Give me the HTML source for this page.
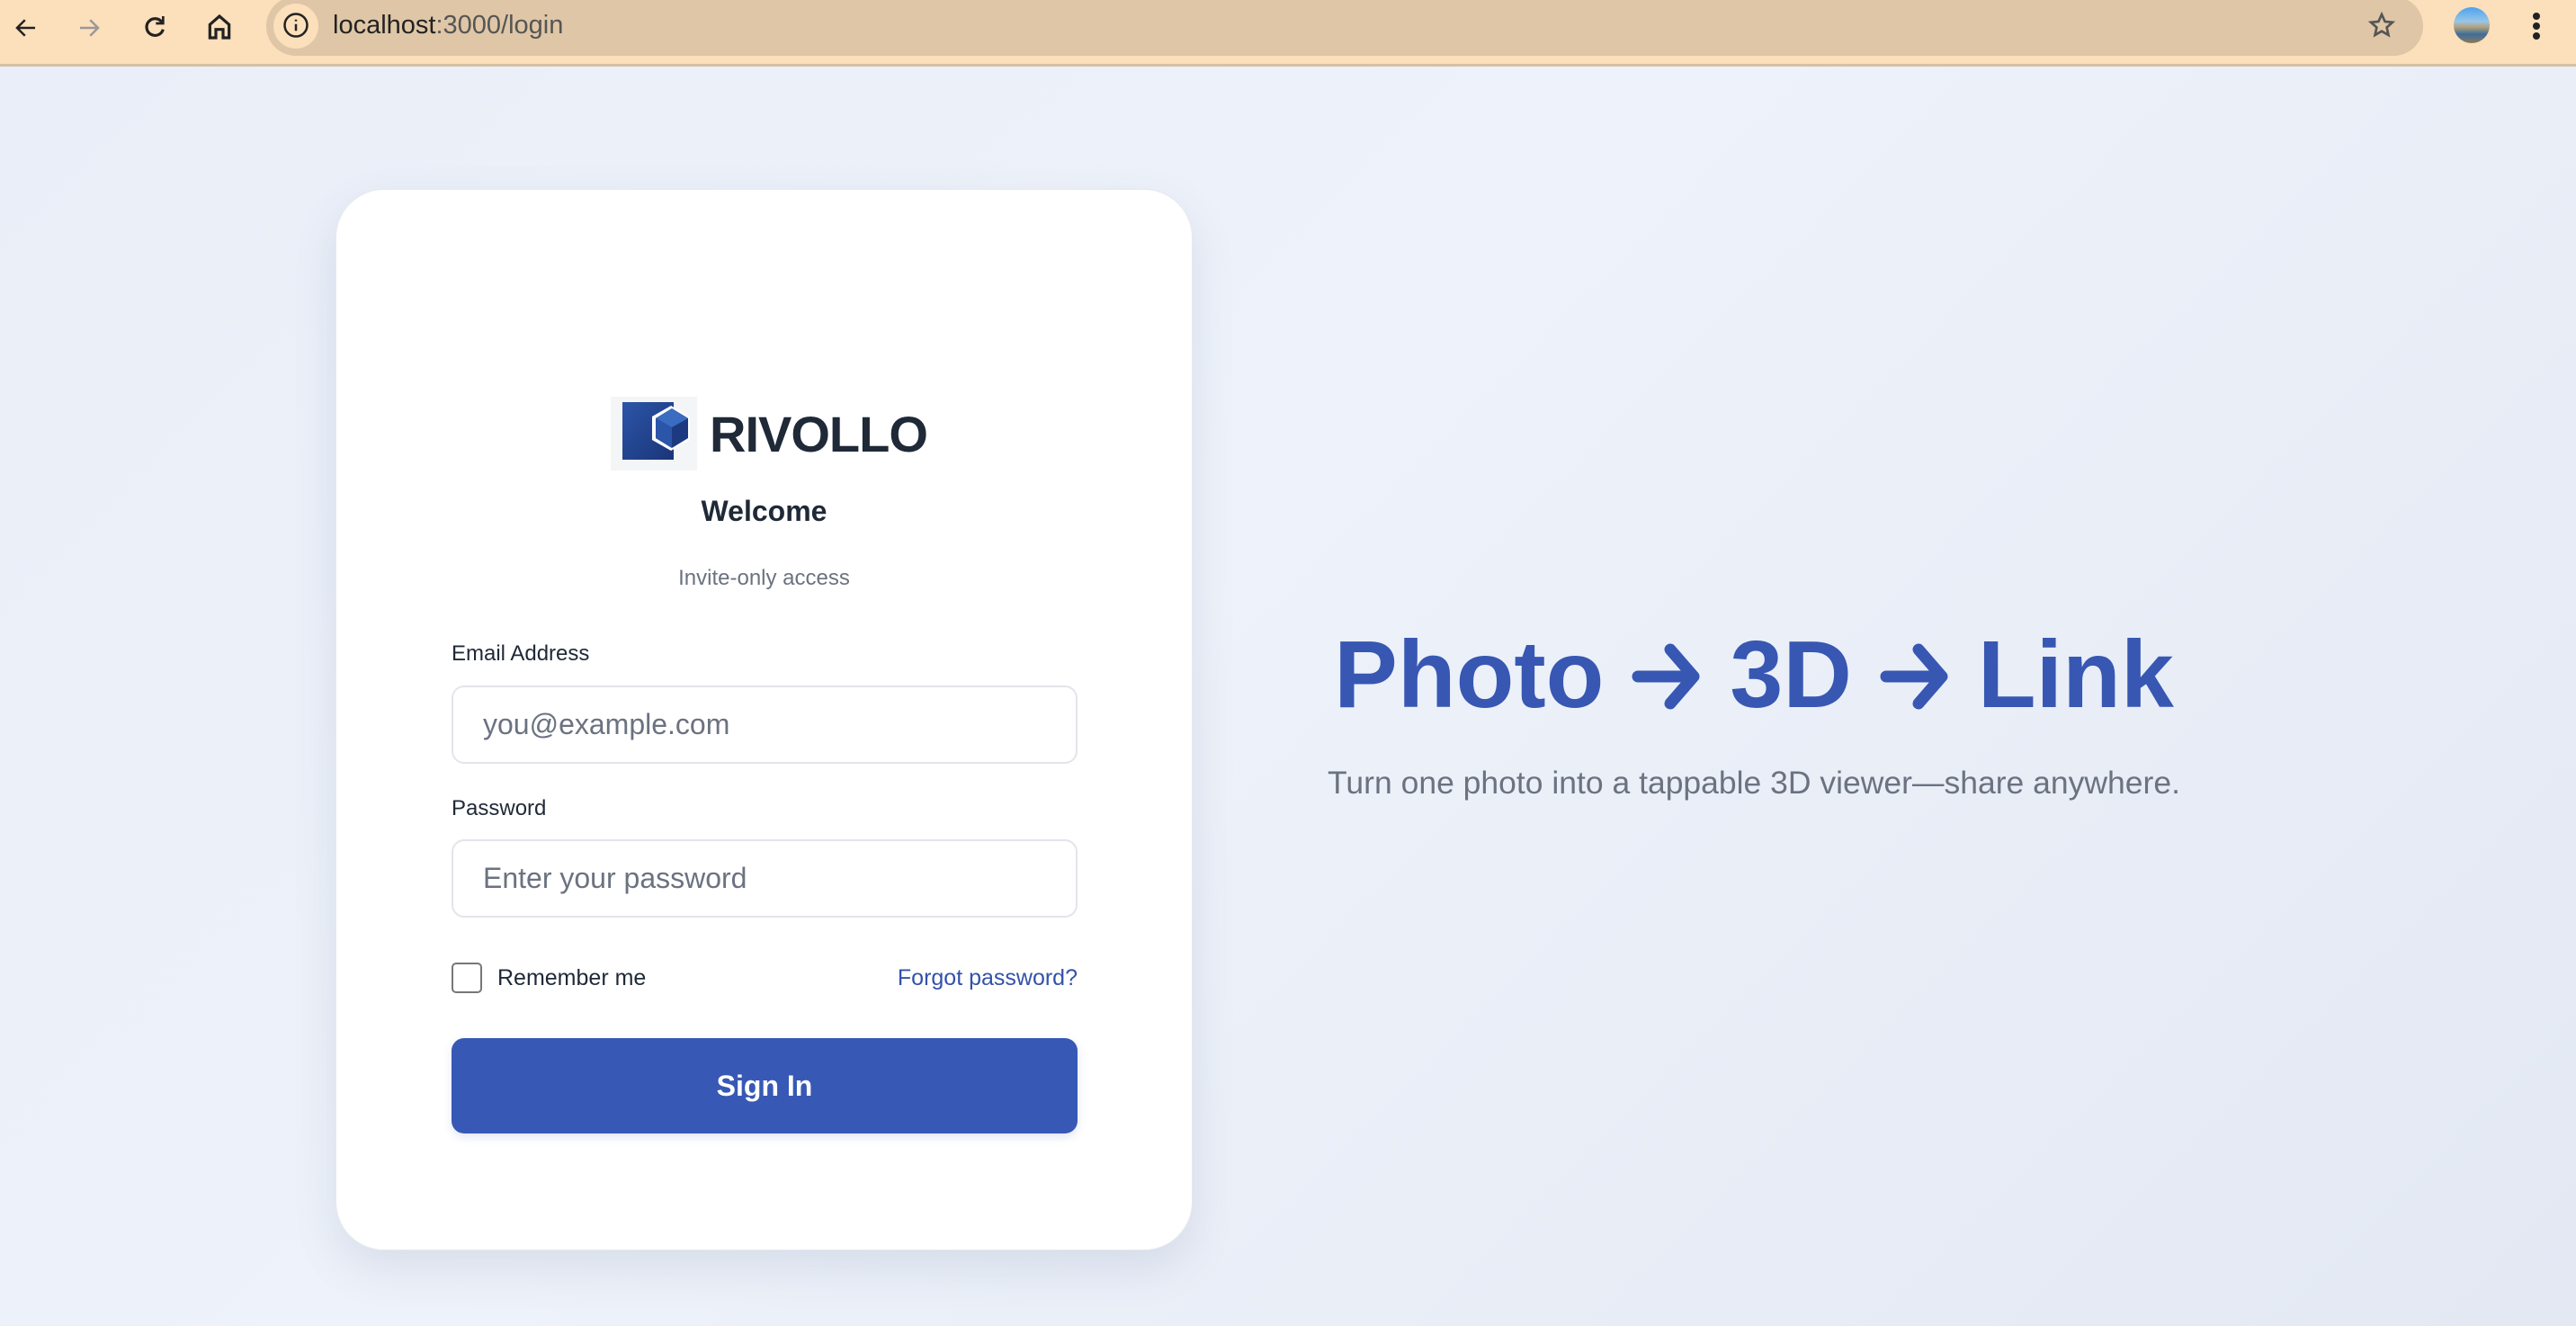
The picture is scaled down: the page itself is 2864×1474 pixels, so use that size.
<!DOCTYPE html>
<html><head><meta charset="utf-8"><style>
*{box-sizing:border-box;margin:0;padding:0}
body{width:2864px;height:1474px;overflow:hidden;font-family:"Liberation Sans",sans-serif;background:linear-gradient(135deg,#e9eef8 0%,#eef2fa 45%,#e3e8f3 100%);position:relative}
.bar{position:absolute;left:0;top:0;width:2864px;height:74px;background:#fcdfbb;border-bottom:3px solid #d6c0a4}
.url{position:absolute;left:296px;top:-4px;width:2398px;height:66px;background:#dfc6a6;border-radius:33px}
.info{position:absolute;left:304px;top:4px;width:50px;height:50px;border-radius:25px;background:#fcdfbb}
.abs{position:absolute}
.card{position:absolute;left:373px;top:210px;width:953px;height:1180px;background:#fff;border-radius:54px;box-shadow:0 20px 50px rgba(60,80,120,.12);border:1px solid #e6e9ef}
.lbl{position:absolute;left:502px;font-size:24px;color:#1f2937;font-weight:500}
.inp{position:absolute;left:502px;width:696px;height:87px;border:2px solid #e2e5ea;border-radius:14px;font-size:32px;color:#6b7280;padding-left:33px;line-height:83px}
.hero{position:absolute;left:1150px;width:1600px;top:690px;text-align:center;font-size:106px;font-weight:700;color:#3757b3;white-space:nowrap}
.hero svg{display:inline-block;vertical-align:middle;margin:0 30px;position:relative;top:-6px}
</style></head><body>
<div class="bar">
 <svg class="abs" style="left:14px;top:16px" width="30" height="30" viewBox="0 0 24 24" fill="none" stroke="#222" stroke-width="2"><path d="M20 12H5M11 5l-7 7 7 7"/></svg>
 <svg class="abs" style="left:84px;top:16px" width="30" height="30" viewBox="0 0 24 24" fill="none" stroke="#999" stroke-width="2"><path d="M4 12h15M13 5l7 7-7 7"/></svg>
 <svg class="abs" style="left:156px;top:14px" width="32" height="32" viewBox="0 0 24 24" fill="none" stroke="#222" stroke-width="2.4"><path d="M18 8a7 7 0 1 0 1 6"/><path d="M19 3v6h-6" stroke-width="2"/></svg>
 <svg class="abs" style="left:228px;top:13px" width="32" height="34" viewBox="0 0 24 24" fill="none" stroke="#222" stroke-width="2.4"><path d="M4 21V10l8-7 8 7v11h-5v-7h-6v7z"/></svg>
 <div class="url"></div>
 <div class="info"></div>
 <svg class="abs" style="left:314px;top:13px" width="30" height="30" viewBox="0 0 24 24" fill="none" stroke="#222" stroke-width="2"><circle cx="12" cy="12" r="10"/><path d="M12 11v6M12 7v1.5"/></svg>
 <div class="abs" style="left:370px;top:12px;font-size:29px;color:#222">localhost<span style="color:#555">:3000/login</span></div>
 <svg class="abs" style="left:2632px;top:12px" width="32" height="32" viewBox="0 0 24 24" fill="none" stroke="#555" stroke-width="2"><path d="M12 3l2.7 6 6.3.6-4.8 4.3 1.4 6.3L12 17l-5.6 3.2 1.4-6.3L3 9.6 9.3 9z"/></svg>
 <div class="abs" style="left:2728px;top:8px;width:40px;height:40px;border-radius:20px;background:linear-gradient(#4aa3f0 0%,#9bc5e6 40%,#b3a27a 55%,#3d6d9a 75%,#8a7a5a 100%)"></div>
 <div class="abs" style="left:2816px;top:14px;width:8px;height:8px;border-radius:4px;background:#222;box-shadow:0 11px 0 #222,0 22px 0 #222"></div>
</div>

<div class="card"></div>
<div class="abs" style="left:679px;top:441px;width:96px;height:82px;background:#f4f5f7"></div>
<svg class="abs" style="left:679px;top:441px" width="96" height="82" viewBox="0 0 96 82">
 <defs><linearGradient id="g" x1="0" y1="0" x2="1" y2="1"><stop offset="0" stop-color="#2c55a8"/><stop offset="1" stop-color="#1a3578"/></linearGradient></defs>
 <path d="M13 6h57v64H13z" fill="url(#g)"/>
 <polygon points="67,10 88,22 88,48 67,60 46,48 46,22" fill="#fff"/>
 <polygon points="68,13 86,24 86,46 68,57 50,46 50,24" fill="#1d3a80"/>
 <polygon points="68,13 86,24 68,34 50,24" fill="#3a6cc0"/>
 <polygon points="50,24 68,34 68,57 50,46" fill="#2a55a8"/>
</svg>
<div class="abs" style="left:789px;top:450px;font-size:56px;font-weight:700;color:#1f2937;letter-spacing:-1px">RIVOLLO</div>
<div class="abs" style="left:373px;width:953px;top:550px;text-align:center;font-size:32px;font-weight:700;color:#1f2937">Welcome</div>
<div class="abs" style="left:373px;width:953px;top:629px;text-align:center;font-size:24px;color:#6b7280">Invite-only access</div>

<div class="lbl" style="top:713px">Email Address</div>
<div class="inp" style="top:762px">you@example.com</div>
<div class="lbl" style="top:885px">Password</div>
<div class="inp" style="top:933px">Enter your password</div>

<div class="abs" style="left:502px;top:1070px;width:34px;height:34px;border:2px solid #777;border-radius:5px"></div>
<div class="abs" style="left:553px;top:1073px;font-size:25px;color:#1f2937">Remember me</div>
<div class="abs" style="left:900px;width:298px;top:1073px;text-align:right;font-size:25px;color:#3352a8">Forgot password?</div>
<div class="abs" style="left:502px;top:1154px;width:696px;height:106px;background:#3759b5;border-radius:14px;color:#fff;font-size:32px;font-weight:700;text-align:center;line-height:106px;box-shadow:0 4px 10px rgba(55,89,181,.15)">Sign In</div>

<div class="hero">Photo<svg width="80" height="76" viewBox="0 0 80 76" fill="none" stroke="#3757b3" stroke-width="13" stroke-linecap="round" stroke-linejoin="round"><path d="M8 38h62M44 8l26 30-26 30"/></svg>3D<svg width="80" height="76" viewBox="0 0 80 76" fill="none" stroke="#3757b3" stroke-width="13" stroke-linecap="round" stroke-linejoin="round"><path d="M8 38h62M44 8l26 30-26 30"/></svg>Link</div>
<div class="abs" style="left:1150px;width:1600px;top:850px;text-align:center;font-size:35.5px;color:#6b7280">Turn one photo into a tappable 3D viewer—share anywhere.</div>
</body></html>
